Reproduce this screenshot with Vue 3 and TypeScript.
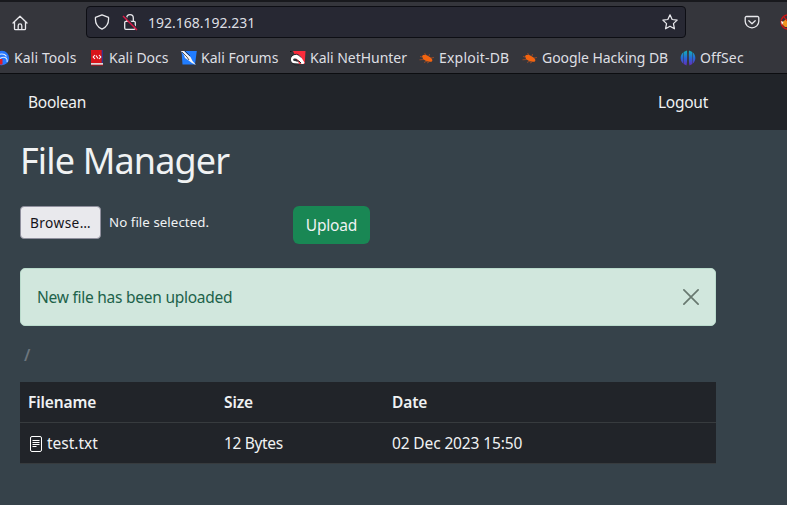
<script setup lang="ts">
interface Bookmark { label: string; icon: string; cls: string }
interface FileRow { name: string; size: string; date: string }

const bookmarks: Bookmark[] = [
  { label: 'Kali Tools', icon: 'tools', cls: 'b-tools' },
  { label: 'Kali Docs', icon: 'docs', cls: 'b-docs' },
  { label: 'Kali Forums', icon: 'forums', cls: 'b-forums' },
  { label: 'Kali NetHunter', icon: 'hunter', cls: 'b-hunter' },
  { label: 'Exploit-DB', icon: 'bug', cls: 'b-exploit' },
  { label: 'Google Hacking DB', icon: 'bug', cls: 'b-google' },
  { label: 'OffSec', icon: 'offsec', cls: 'b-offsec' },
]
const files: FileRow[] = [{ name: 'test.txt', size: '12 Bytes', date: '02 Dec 2023 15:50' }]
</script>

<template>
  <div class="window">
    <header class="browser">
      <div class="toolbar">
        <svg class="home" width="16" height="16" viewBox="0 0 16 16" fill="none" stroke="#e9e9ed" stroke-width="1.3" stroke-linejoin="round" stroke-linecap="round">
          <path d="M1 8 8 1.2 15 8M2.5 7v6.7a1 1 0 0 0 1 1h9a1 1 0 0 0 1-1V7M6.2 14.5v-3.8a1.8 1.8 0 0 1 3.6 0v3.8" />
        </svg>
        <div class="url">
          <svg class="shield" width="16" height="16" viewBox="0 0 16 16" fill="none" stroke="#e9e9ed" stroke-width="1.3" stroke-linejoin="round">
            <path d="M8 .9 14.5 3.3c.5 5-1.5 9.7-6.5 11.9C3 13 1 8.3 1.5 3.3Z" />
          </svg>
          <svg class="lock" width="16" height="17" viewBox="0 0 16 17" fill="none">
            <rect x="2.7" y="7.3" width="10.6" height="8" rx="1.2" stroke="#e9e9ed" stroke-width="1.3" />
            <path d="M4.7 7V4a3.3 3.3 0 0 1 6.6 0v3" stroke="#e9e9ed" stroke-width="1.3" />
            <path d="M2 1.5 16 15.5" stroke="#272833" stroke-width="1.5" />
            <path d="M1 2 15 16" stroke="#e01848" stroke-width="1.4" />
          </svg>
          <span class="address">192.168.192.231</span>
          <svg class="star" width="16" height="16" viewBox="0 0 16 16" fill="none" stroke="#e9e9ed" stroke-width="1.25" stroke-linejoin="round">
            <path d="m8 .8 2.15 4.7 5 .6-3.7 3.5 1 5.2L8 12.2l-4.45 2.6 1-5.2L.85 6.1l5-.6Z" />
          </svg>
        </div>
        <svg class="pocket" width="16" height="16" viewBox="0 0 16 16" fill="none" stroke="#e9e9ed" stroke-width="1.3" stroke-linecap="round" stroke-linejoin="round">
          <path d="M2.5 2.5h11a1.3 1.3 0 0 1 1.3 1.3v3.5a6.8 6.5 0 0 1-13.6 0V3.8a1.3 1.3 0 0 1 1.3-1.3ZM4.8 6.7 8 9.7l3.2-3" />
        </svg>
        <svg class="proxy" width="16" height="16" viewBox="0 0 16 16">
          <circle cx="8" cy="8" r="7" fill="#3c3036" stroke="#cc1515" stroke-width="1.4" />
          <path d="m2 8 2-1 2-2 6 4v4H5L3 11Z" fill="#f09522" />
          <path d="m1 7 2.5 1L2 11Z" fill="#fff" />
          <path d="m4 3 9 10" stroke="#cc1515" stroke-width="1.2" />
        </svg>
      </div>
      <nav class="bookmarks">
        <div v-for="b in bookmarks" :key="b.label" class="bookmark" :class="b.cls">
          <svg width="16" height="16" viewBox="0 0 16 16">
            <g v-if="b.icon === 'tools'">
              <circle cx="8" cy="8" r="7.2" fill="#2777ff" />
              <path d="M5 4.5q5-1.5 7.5 1.8M6 8.500q4-2.500 6.500 0 1 1.500.5 3.500" fill="none" stroke="#d9eaff" stroke-width="1.1" />
              <path d="M4 9h4.500v5.500H6Z" fill="#e21b24" />
            </g>
            <g v-else-if="b.icon === 'docs'">
              <path d="M2 0h12v13H2Z" fill="#d9141b" />
              <path d="M12.700 0H14v13h-1.300Z" fill="#31338b" />
              <path d="M2 13h12v2H2Z" fill="#ded9da" />
              <path d="M2 14.700h12v1H2Z" fill="#a81820" />
              <path d="m6 5-1.800 2L6 9m4-4 1.800 2L10 9M7 5.500l2 3" fill="none" stroke="#fff" stroke-width="1.1" />
            </g>
            <g v-else-if="b.icon === 'forums'">
              <path d="M.5 1h15.300L14 14.500H1.500Z" fill="#217dff" />
              <path d="M0 1h3l3 3 3.500 3 2 4 3.500 4-4-2-4-3-3-2-1-3Z" fill="#f6f6f6" />
              <path d="M1 2 6 7l2 3M4 1l5 5" fill="none" stroke="#262830" stroke-width=".8" />
            </g>
            <g v-else-if="b.icon === 'hunter'">
              <path d="M3 1h12.500l-.8 13H9Z" fill="#fa2b3b" />
              <path d="M2.500 13C-.5 10 1 5 5.500 4.500c5-.5 6 3.500 9 8-1 2-3 2-4.500 0-2-2.500-2.500-4-5-4-2 0-2.500 1.500-1 2.500l4 .5 1 2Z" fill="#fff" />
              <path d="M1 6.500q6-5 10 1M5 9.500q1 2 4 1.500l2 2M2 13l3 2h4" fill="none" stroke="#25262b" stroke-width="1" />
              <path d="M0 1h1.500v1H0Z" fill="#111" />
            </g>
            <g v-else-if="b.icon === 'bug'">
              <path d="M3 6c2-2 4-1.500 7 .5 3 1.500 4 3.500 3 5-3 1-7-.5-9-2.500Z" fill="#f36410" />
              <path d="m7 5-1.500-2M10 6l.5-2M3 7 1 6.500M5 9.500l-4.500.3M8 11l-3 1.500M12 8l3-.5M10 12l-2 1" fill="none" stroke="#a74e25" stroke-width=".8" />
            </g>
            <g v-else>
              <defs><linearGradient id="offsec-color" gradientUnits="userSpaceOnUse" x1="0" y1="1" x2="0" y2="15"><stop offset="0" stop-color="#12aebb" /><stop offset=".5" stop-color="#2868d8" /><stop offset="1" stop-color="#6030bc" /></linearGradient></defs>
              <path d="M7 .5C7.300 4 7.300 12 6.500 15.500L3.700 14V2ZM3.200 2.500v11C-.2 11-.2 5 3.200 2.500ZM9 .5C8.700 4 8.700 12 9.500 15.500l2.800-1.500V2ZM12.800 2.500v11c3.400-2.500 3.400-8.500 0-11Z" fill="url(#offsec-color)" />
            </g>
          </svg>
          <span>{{ b.label }}</span>
        </div>
      </nav>
    </header>
    <nav class="navbar"><span class="brand">Boolean</span><span class="logout">Logout</span></nav>
    <main class="content">
      <h1><span>File Manager</span></h1>
      <form class="upload" @submit.prevent>
        <div class="picker"><button type="button" class="browse">Browse…</button><span class="none">No file selected.</span></div>
        <button class="submit" type="submit">Upload</button>
      </form>
      <div class="alert" role="alert">
        <span>New file has been uploaded</span>
        <svg width="16" height="16" viewBox="0 0 16 16" fill="none" stroke="#68786f" stroke-width="1.7" stroke-linecap="round"><path d="m.9.9 14.2 14.2M15.100.9.9 15.100" /></svg>
      </div>
      <div class="crumb">/</div>
      <table>
        <thead><tr><th class="c-name"><span>Filename</span></th><th class="c-size"><span>Size</span></th><th><span>Date</span></th></tr></thead>
        <tbody>
          <tr v-for="f in files" :key="f.name">
            <td><div class="file">
              <svg width="12" height="16" viewBox="0 0 12 16" fill="none" stroke="#fff"><rect x=".5" y=".5" width="11" height="15" rx="1.5" /><path d="M2.500 4.500h7M2.500 6.500h7M2.500 8.500h7M2.500 10.500h4" /></svg>
              <span class="t-name">{{ f.name }}</span>
            </div></td>
            <td><span class="t-size">{{ f.size }}</span></td>
            <td><span class="t-date">{{ f.date }}</span></td>
          </tr>
        </tbody>
      </table>
    </main>
  </div>
</template>

<style>
body { margin: 0; background: #36424a; }
</style>
<style scoped>
* { box-sizing: border-box; }
.window { width: 787px; height: 505px; overflow: hidden; background: #36424a; color: #f0f2f3; font: 15.5px/24px "Noto Sans", sans-serif; }
span, button { white-space: nowrap; }
svg { display: block; flex: none; }
.browser { height: 74px; background: #35363c; border-top: 2px solid #18191d; border-bottom: 1px solid #0c0d10; color: #dedfe3; overflow: hidden; }
.toolbar { height: 42px; display: flex; align-items: center; padding: 0 0 2px 12px; }
.home { margin-top: 1px; }
.url { width: 600px; height: 32px; margin-left: 58px; padding: 0 7px; display: flex; align-items: center; flex: none; background: #272833; border: 1px solid #0d0e14; border-radius: 4px; }
.lock { margin-left: 12px; }
.address { margin-left: 10px; font-size: 14px; position: relative; top: 1px; }
.star { margin-left: auto; }
.pocket { margin-left: 58px; }
.proxy { margin-left: 20px; }
.bookmarks { display: flex; height: 28px; align-items: center; margin-left: -6px; }
.bookmark { display: flex; align-items: center; gap: 4px; font-size: 14px; line-height: 20px; flex: none; }
.b-tools { width: 95px; letter-spacing: .1px; }
.b-docs { width: 92px; }
.b-forums { width: 109px; }
.b-hunter { width: 129px; letter-spacing: -.03px; }
.b-exploit { width: 103px; letter-spacing: .2px; }
.b-google { width: 158px; letter-spacing: -.06px; }
.b-offsec { letter-spacing: .15px; }
.navbar { height: 56px; background: #212429; display: flex; justify-content: space-between; padding: 16px 79px 0 28px; }
.brand, .logout { letter-spacing: -.25px; }
.content { width: 716px; padding-left: 20px; }
h1 { margin: 0; height: 76px; padding-top: 8px; font-size: 36px; font-weight: 400; line-height: 46px; letter-spacing: -.85px; }
.upload { height: 62px; display: flex; align-items: flex-start; }
.picker { width: 273px; display: flex; align-items: center; }
.browse { width: 81px; height: 33px; padding: 0; border: 1px solid #8f8f9d; border-radius: 4px; color: #15141a; background: #e9e9ed; font: 13.7px/20px "Noto Sans", sans-serif; letter-spacing: .4px; }
.none { margin-left: 8px; font-size: 13.3px; line-height: 20px; letter-spacing: .05px; position: relative; top: -1px; }
.submit { width: 77px; height: 38px; padding: 0; border: 0; border-radius: 6px; color: #f0f2f3; background: #198754; font: 15.5px/24px "Noto Sans", sans-serif; letter-spacing: -.2px; }
.alert { height: 58px; padding: 0 16px; display: flex; align-items: center; justify-content: space-between; color: #20624a; background: #d1e7dd; border: 1px solid #badbcc; border-radius: 5px; letter-spacing: -.25px; }
.crumb { height: 56px; padding: 17px 0 0 4px; color: #6c757d; font-size: 16px; font-weight: 600; }
table { width: 696px; border-collapse: separate; border-spacing: 0; table-layout: fixed; background: #212429; }
.c-name { width: 196px; }
.c-size { width: 168px; }
th, td { height: 41px; padding: 0 8px; text-align: left; border-bottom: 1px solid #373b3e; }
th { font-weight: 600; letter-spacing: -.12px; }
.file { display: flex; align-items: center; gap: 5px; padding-left: 2px; }
.file svg { position: relative; top: 1px; }
.t-size { letter-spacing: -.35px; }
.t-date { letter-spacing: -.13px; }
</style>
